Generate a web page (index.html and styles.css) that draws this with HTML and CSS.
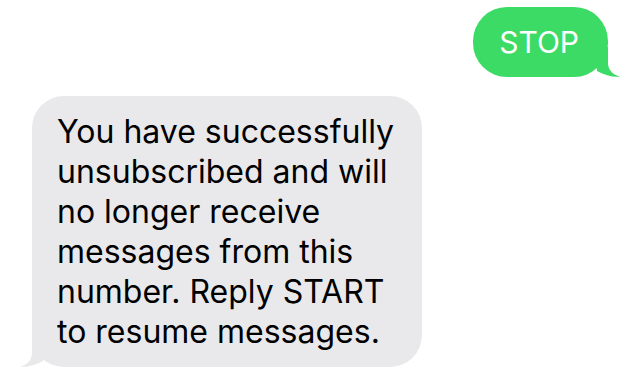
FILE: index.html
```html
<!DOCTYPE html>
<html>
<head>
<meta charset="utf-8">
<link rel="stylesheet" href="styles.css">
</head>
<body>
<div class="thread">
  <div class="row row-out">
    <div class="bubble bubble-out">
      STOP
      <svg class="tail tail-out" viewBox="0 0 26 30" width="26" height="30"><path d="M0 0 L13 0 L13 16 C13 23 18 28 25 29.6 C19 30.6 10 28.5 2 24 Z"/></svg>
    </div>
  </div>
  <div class="row row-in">
    <div class="bubble bubble-in">
      You have successfully unsubscribed and will no longer receive messages from this number. Reply START to resume messages.
      <svg class="tail tail-in" viewBox="0 0 26 30" width="26" height="30"><path d="M0 0 L13 0 L13 16 C13 23 18 28 25 29.6 C19 30.6 10 28.5 2 24 Z"/></svg>
    </div>
  </div>
</div>
</body>
</html>
```
FILE: styles.css
```css
html, body {
  margin: 0;
  padding: 0;
  background: #ffffff;
}
body {
  font-family: "Inter", "Liberation Sans", sans-serif;
  width: 640px;
  height: 380px;
  overflow: hidden;
}
.thread {
  display: flex;
  flex-direction: column;
  padding-top: 7px;
}
.row {
  display: flex;
}
.row-out {
  justify-content: flex-end;
  padding-right: 32px;
}
.row-in {
  justify-content: flex-start;
  padding-left: 32px;
  margin-top: 19px;
}
.bubble {
  position: relative;
}
.bubble-out {
  background: #3bdb65;
  color: #ffffff;
  font-size: 30px;
  height: 70px;
  box-sizing: border-box;
  padding: 0 29px 0 26px;
  display: flex;
  align-items: center;
  border-radius: 34px;
}
.bubble-in {
  background: #e9e9eb;
  color: #000000;
  font-size: 32px;
  line-height: 40px;
  width: 390px;
  box-sizing: border-box;
  padding: 16px 22px 15px 25px;
  border-radius: 32px;
}
.tail {
  position: absolute;
  bottom: 0;
}
.tail-out {
  right: -13px;
  fill: #3bdb65;
}
.tail-in {
  left: -13px;
  fill: #e9e9eb;
  transform: scaleX(-1);
}
```
